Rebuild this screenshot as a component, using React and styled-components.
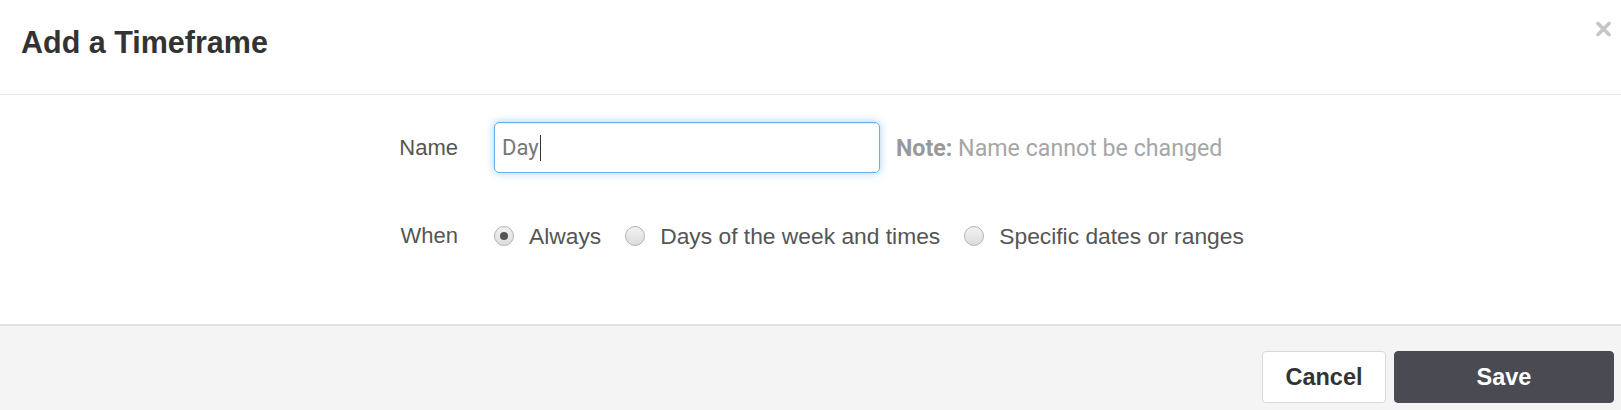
import React from "react";
import styled, { createGlobalStyle } from "styled-components";

const GlobalStyle = createGlobalStyle`
  html, body {
    margin: 0;
    padding: 0;
    background: #fff;
  }
  body {
    font-family: "Liberation Sans", Arial, sans-serif;
  }
  * {
    box-sizing: border-box;
  }
`;

const options = [
  { id: "always", label: "Always", checked: true },
  { id: "weekly", label: "Days of the week and times" },
  { id: "dates", label: "Specific dates or ranges" },
];

export default function App() {
  return (
    <>
      <GlobalStyle />
      <Modal>
        <Header>
          <Title>Add a Timeframe</Title>
          <CloseButton aria-label="Close">
            <svg width="17" height="16" viewBox="0 0 17 16">
              <path
                d="M3 2.5 L14 13.5 M14 2.5 L3 13.5"
                stroke="currentColor"
                strokeWidth="3.6"
                strokeLinecap="round"
              />
            </svg>
          </CloseButton>
        </Header>

        <Body>
          <FormGrid>
            <Label>Name</Label>
            <FieldRow>
              <NameField>
                Day
                <Caret />
              </NameField>
              <Note>
                <strong>Note:</strong> Name cannot be changed
              </Note>
            </FieldRow>

            <Label>When</Label>
            <RadioRow>
              {options.map((o) => (
                <RadioOption key={o.id}>
                  <RadioDot $checked={o.checked} />
                  {o.label}
                </RadioOption>
              ))}
            </RadioRow>
          </FormGrid>
        </Body>

        <Footer>
          <CancelButton>Cancel</CancelButton>
          <SaveButton>Save</SaveButton>
        </Footer>
      </Modal>
    </>
  );
}

/* ---------- layout ---------- */

const Modal = styled.div`
  width: 1621px;
  height: 410px;
  overflow: hidden;
  display: flex;
  flex-direction: column;
  background: #fff;
`;

const Header = styled.div`
  height: 95px;
  display: flex;
  justify-content: space-between;
  align-items: flex-start;
  padding: 26px 9px 0 21px;
  border-bottom: 1px solid #e6e6e6;
`;

const Title = styled.h2`
  margin: 0;
  font-size: 30.5px;
  line-height: 33px;
  font-weight: 700;
  color: #333;
`;

const CloseButton = styled.button`
  border: 0;
  background: none;
  padding: 0;
  margin-top: -5px;
  color: #c6c6c6;
  cursor: pointer;
  display: flex;
`;

const Body = styled.div`
  height: 229px;
  padding: 27px 0 0 397px;
`;

const FormGrid = styled.div`
  display: grid;
  grid-template-columns: 61px auto;
  column-gap: 36px;
  row-gap: 48px;
  align-items: center;
`;

const Label = styled.div`
  font-size: 22px;
  color: #555;
  text-align: right;
`;

const FieldRow = styled.div`
  display: flex;
  align-items: center;
  gap: 16px;
`;

const NameField = styled.div`
  width: 386px;
  height: 51px;
  display: flex;
  align-items: center;
  padding: 0 7px;
  border: 1px solid #66afe9;
  border-radius: 5px;
  box-shadow: inset 0 1px 1px rgba(0, 0, 0, 0.075),
    0 0 8px rgba(102, 175, 233, 0.6);
  font-family: Roboto, "Liberation Sans", sans-serif;
  font-size: 22px;
  color: #777;
`;

const Caret = styled.span`
  display: inline-block;
  width: 1px;
  height: 26px;
  margin-left: 1px;
  background: #333;
`;

const Note = styled.div`
  font-family: Roboto, "Liberation Sans", sans-serif;
  font-size: 23.2px;
  color: #a6a6a6;

  strong {
    color: #999;
  }
`;

const RadioRow = styled.div`
  display: flex;
  align-items: center;
  gap: 24px;
  height: 30px;
`;

const RadioOption = styled.label`
  display: flex;
  align-items: center;
  gap: 15px;
  font-size: 22.8px;
  color: #555;
`;

const RadioDot = styled.span`
  width: 20px;
  height: 20px;
  border-radius: 50%;
  border: 1px solid #b3b3b3;
  background: linear-gradient(#f2f2f2, #dcdcdc);
  display: flex;
  align-items: center;
  justify-content: center;

  &::after {
    content: "";
    width: 8px;
    height: 8px;
    border-radius: 50%;
    background: #555;
    display: ${(p) => (p.$checked ? "block" : "none")};
  }
`;

const Footer = styled.div`
  flex: 1;
  display: flex;
  justify-content: flex-end;
  align-items: flex-start;
  gap: 8px;
  padding: 25px 7px 0 0;
  background: #f4f4f4;
  border-top: 2px solid #e2e2e2;
`;

const BaseButton = styled.button`
  height: 52px;
  border-radius: 4px;
  font-family: "Liberation Sans", Arial, sans-serif;
  font-size: 23.5px;
  font-weight: 700;
  cursor: pointer;
`;

const CancelButton = styled(BaseButton)`
  width: 124px;
  background: #fff;
  border: 1px solid #d9d9d9;
  color: #333;
`;

const SaveButton = styled(BaseButton)`
  width: 220px;
  background: #4a4a53;
  border: 1px solid #4a4a53;
  color: #fff;
`;
